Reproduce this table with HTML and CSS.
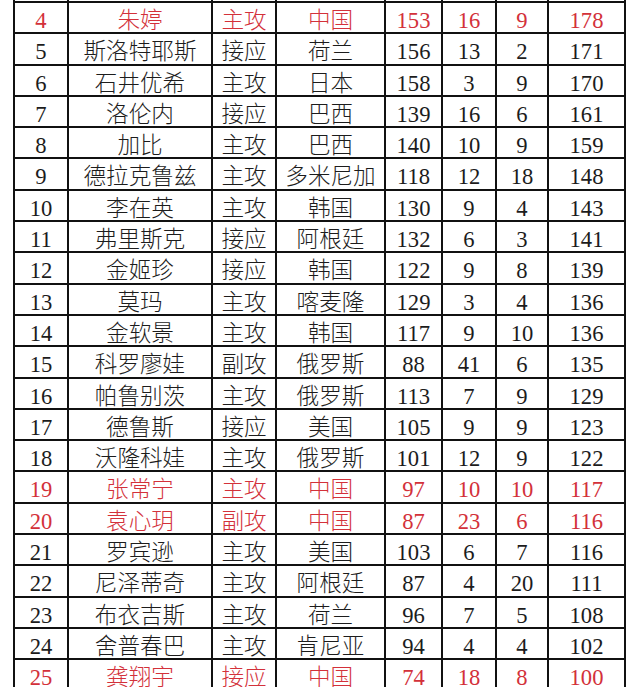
FILE: index.html
```html
<!DOCTYPE html>
<html lang="zh">
<head>
<meta charset="utf-8">
<title>得分榜</title>
<link rel="stylesheet" href="styles.css">
</head>
<body>
<div class="sheet">
<table class="stats">
<colgroup>
<col class="c-rank"><col class="c-name"><col class="c-pos"><col class="c-country"><col class="c-atk"><col class="c-blk"><col class="c-ace"><col class="c-total">
</colgroup>
<tbody>
<tr class="cut"><td></td><td></td><td></td><td></td><td></td><td></td><td></td><td></td></tr>
<tr class="cn"><td>4</td><td>朱婷</td><td>主攻</td><td>中国</td><td>153</td><td>16</td><td>9</td><td>178</td></tr>
<tr><td>5</td><td>斯洛特耶斯</td><td>接应</td><td>荷兰</td><td>156</td><td>13</td><td>2</td><td>171</td></tr>
<tr><td>6</td><td>石井优希</td><td>主攻</td><td>日本</td><td>158</td><td>3</td><td>9</td><td>170</td></tr>
<tr><td>7</td><td>洛伦内</td><td>接应</td><td>巴西</td><td>139</td><td>16</td><td>6</td><td>161</td></tr>
<tr><td>8</td><td>加比</td><td>主攻</td><td>巴西</td><td>140</td><td>10</td><td>9</td><td>159</td></tr>
<tr><td>9</td><td>德拉克鲁兹</td><td>主攻</td><td>多米尼加</td><td>118</td><td>12</td><td>18</td><td>148</td></tr>
<tr><td>10</td><td>李在英</td><td>主攻</td><td>韩国</td><td>130</td><td>9</td><td>4</td><td>143</td></tr>
<tr><td>11</td><td>弗里斯克</td><td>接应</td><td>阿根廷</td><td>132</td><td>6</td><td>3</td><td>141</td></tr>
<tr><td>12</td><td>金姬珍</td><td>接应</td><td>韩国</td><td>122</td><td>9</td><td>8</td><td>139</td></tr>
<tr><td>13</td><td>莫玛</td><td>主攻</td><td>喀麦隆</td><td>129</td><td>3</td><td>4</td><td>136</td></tr>
<tr><td>14</td><td>金软景</td><td>主攻</td><td>韩国</td><td>117</td><td>9</td><td>10</td><td>136</td></tr>
<tr><td>15</td><td>科罗廖娃</td><td>副攻</td><td>俄罗斯</td><td>88</td><td>41</td><td>6</td><td>135</td></tr>
<tr><td>16</td><td>帕鲁别茨</td><td>主攻</td><td>俄罗斯</td><td>113</td><td>7</td><td>9</td><td>129</td></tr>
<tr><td>17</td><td>德鲁斯</td><td>接应</td><td>美国</td><td>105</td><td>9</td><td>9</td><td>123</td></tr>
<tr><td>18</td><td>沃隆科娃</td><td>主攻</td><td>俄罗斯</td><td>101</td><td>12</td><td>9</td><td>122</td></tr>
<tr class="cn"><td>19</td><td>张常宁</td><td>主攻</td><td>中国</td><td>97</td><td>10</td><td>10</td><td>117</td></tr>
<tr class="cn"><td>20</td><td>袁心玥</td><td>副攻</td><td>中国</td><td>87</td><td>23</td><td>6</td><td>116</td></tr>
<tr><td>21</td><td>罗宾逊</td><td>主攻</td><td>美国</td><td>103</td><td>6</td><td>7</td><td>116</td></tr>
<tr><td>22</td><td>尼泽蒂奇</td><td>主攻</td><td>阿根廷</td><td>87</td><td>4</td><td>20</td><td>111</td></tr>
<tr><td>23</td><td>布衣吉斯</td><td>主攻</td><td>荷兰</td><td>96</td><td>7</td><td>5</td><td>108</td></tr>
<tr><td>24</td><td>舍普春巴</td><td>主攻</td><td>肯尼亚</td><td>94</td><td>4</td><td>4</td><td>102</td></tr>
<tr class="cn"><td>25</td><td>龚翔宇</td><td>接应</td><td>中国</td><td>74</td><td>18</td><td>8</td><td>100</td></tr>
</tbody>
</table>
</div>
</body>
</html>
```

FILE: styles.css
```css
html, body {
  margin: 0;
  padding: 0;
  background: #ffffff;
}

.sheet {
  height: 687px;
  overflow: hidden;
}

.stats {
  margin-left: 13px;
  border-spacing: 0;
  border-collapse: separate;
  border-left: 2px solid #111;
  table-layout: fixed;
  width: 613px;
  font-family: "Liberation Serif", "Noto Sans CJK SC", serif;
  font-size: 22.6px;
  font-weight: 300;
  color: #1c1c1c;
}

.c-rank { width: 54px; }
.c-name { width: 144px; }
.c-pos { width: 64px; }
.c-country { width: 109px; }
.c-atk { width: 57px; }
.c-blk { width: 54px; }
.c-ace { width: 52px; }
.c-total { width: 77px; }

.stats td {
  border-right: 2px solid #111;
  border-bottom: 2px solid #111;
  padding: 7px 0 0;
  height: 22.3px;
  line-height: 22px;
  text-align: center;
  vertical-align: top;
  white-space: nowrap;
  overflow: hidden;
}

.stats tr.cut td {
  height: 1px;
  padding: 0;
  line-height: 1px;
}

.stats tr.cn td {
  color: #d3313a;
}
```
